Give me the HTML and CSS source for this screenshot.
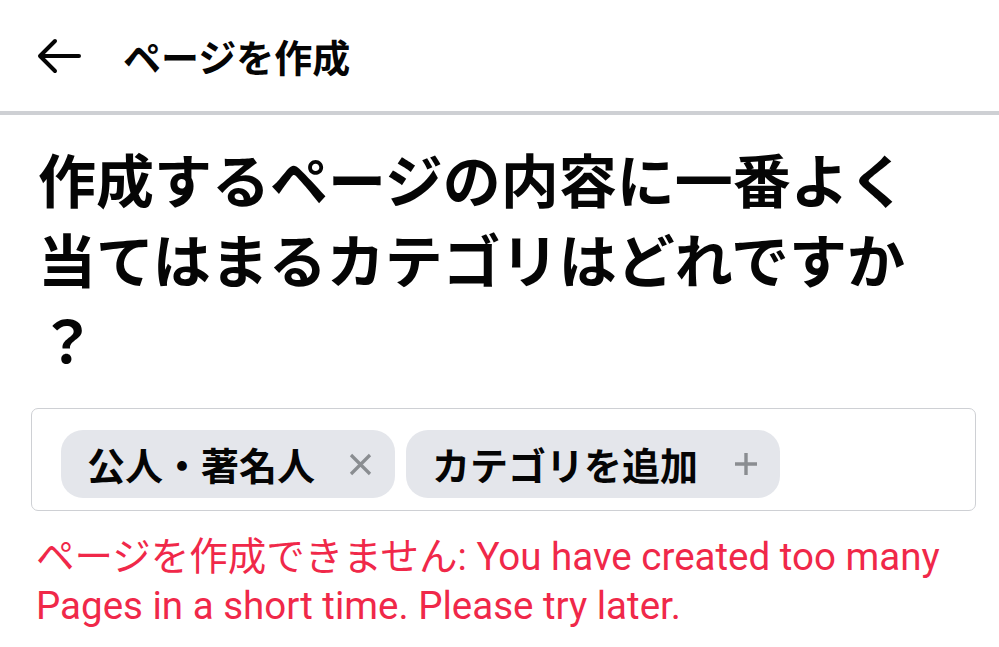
FILE: index.html
```html
<!DOCTYPE html>
<html lang="ja">
<head>
<meta charset="utf-8">
<title>ページを作成</title>
<link rel="stylesheet" href="styles.css">
</head>
<body>
<header class="topbar">
  <svg class="back" width="44" height="36" viewBox="0 0 44 36" aria-hidden="true">
    <path d="M42 18H4M18 3L3 18L18 33" fill="none" stroke="#050505" stroke-width="4" stroke-linecap="round" stroke-linejoin="round"/>
  </svg>
  <h1 class="title">ページを作成</h1>
</header>
<main class="content">
  <h2 class="question">作成するページの内容に一番よく当てはまるカテゴリはどれですか？</h2>
  <div class="field">
    <span class="chip">
      <span class="chip-label">公人・著名人</span>
      <svg class="chip-icon icon-x" width="23" height="23" viewBox="0 0 23 23" aria-hidden="true">
        <path d="M2 2L21 21M21 2L2 21" fill="none" stroke="#8a8d91" stroke-width="3.2" stroke-linecap="butt"/>
      </svg>
    </span>
    <span class="chip">
      <span class="chip-label">カテゴリを追加</span>
      <svg class="chip-icon icon-plus" width="22" height="22" viewBox="0 0 22 22" aria-hidden="true">
        <path d="M11 0V22M0 11H22" fill="none" stroke="#8a8d91" stroke-width="3.4"/>
      </svg>
    </span>
  </div>
  <p class="error">ページを作成できません: You have created too many Pages in a short time. Please try later.</p>
</main>
</body>
</html>
```

FILE: styles.css
```css
html, body {
  margin: 0;
  padding: 0;
  background: #ffffff;
}

body {
  font-family: "Noto Sans CJK JP", "Noto Sans", sans-serif;
  color: #050505;
}

.topbar {
  height: 111px;
  display: flex;
  align-items: center;
  padding-left: 37px;
  border-bottom: 4px solid #ced0d4;
}

.back {
  display: block;
  flex: none;
}

.title {
  margin: 0 0 0 42px;
  font-size: 38px;
  font-weight: 700;
  line-height: 1;
}

.content {
  padding: 23px 23px 0 31px;
}

.question {
  margin: 0 0 30px 7px;
  padding-right: 15px;
  font-size: 58px;
  line-height: 80px;
  font-weight: 700;
  line-break: anywhere;
}

.field {
  border: 1px solid #ced0d4;
  border-radius: 7px;
  padding: 21px 29px 12px 29px;
  display: flex;
  gap: 11px;
}

.chip {
  height: 68px;
  border-radius: 22px;
  background: #e4e6eb;
  display: flex;
  align-items: center;
  padding: 0 23px 0 26px;
}

.chip-label {
  font-size: 38px;
  font-weight: 700;
  line-height: 1;
}

.chip-icon {
  display: block;
  flex: none;
}

.icon-x {
  margin-left: 34px;
}

.icon-plus {
  margin-left: 37px;
}

.error {
  margin: 21px 0 0 5px;
  font-family: Roboto, "Noto Sans CJK JP", sans-serif;
  font-size: 38.5px;
  line-height: 49px;
  color: #f02849;
}
```
